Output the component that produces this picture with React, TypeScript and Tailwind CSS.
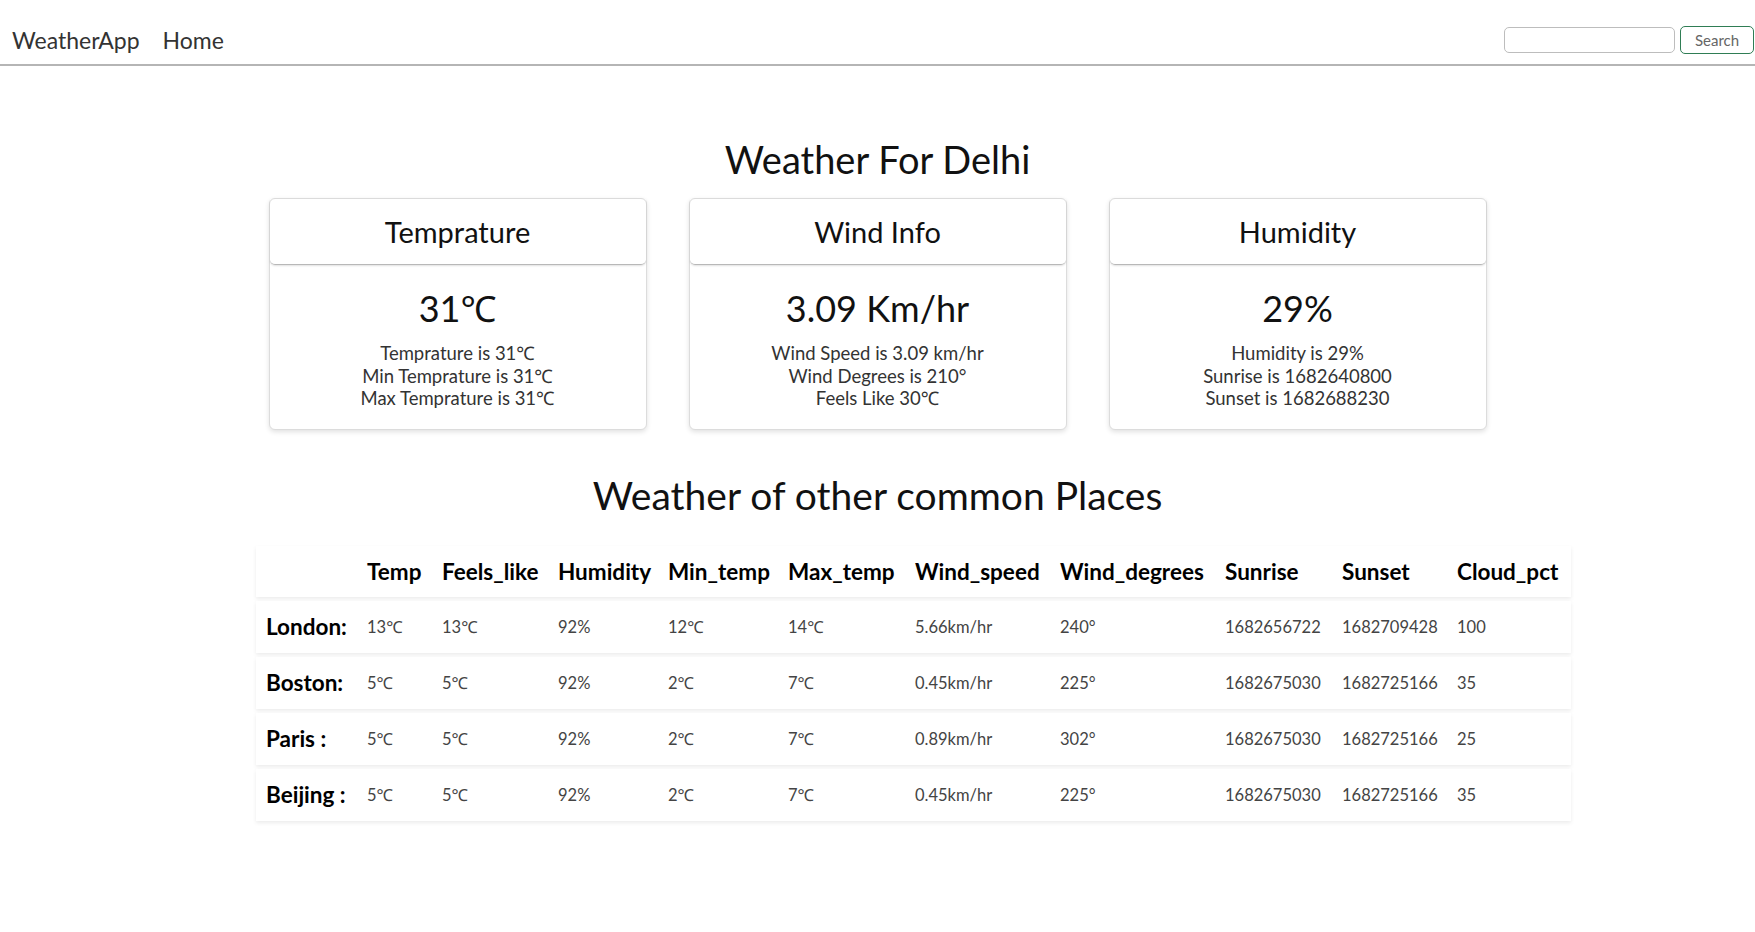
import React from "react";

const cols = [102, 75, 116, 110, 120, 127, 145, 165, 117, 115, 123];
const headers = ["", "Temp", "Feels_like", "Humidity", "Min_temp", "Max_temp", "Wind_speed", "Wind_degrees", "Sunrise", "Sunset", "Cloud_pct"];
const rows = [
  ["London:", "13℃", "13℃", "92%", "12℃", "14℃", "5.66km/hr", "240°", "1682656722", "1682709428", "100"],
  ["Boston:", "5℃", "5℃", "92%", "2℃", "7℃", "0.45km/hr", "225°", "1682675030", "1682725166", "35"],
  ["Paris :", "5℃", "5℃", "92%", "2℃", "7℃", "0.89km/hr", "302°", "1682675030", "1682725166", "25"],
  ["Beijing :", "5℃", "5℃", "92%", "2℃", "7℃", "0.45km/hr", "225°", "1682675030", "1682725166", "35"],
];

function Card({ title, value, lines }: { title: string; value: string; lines: string[] }) {
  return (
    <div className="w-[378px] h-[232px] rounded-[6px] border border-[#dcdcdc] shadow-[0_2px_5px_rgba(0,0,0,0.12)] bg-white flex flex-col">
      <div className="h-[66px] flex items-center justify-center border-b border-[#b8b8b8] rounded-b-[5px] shadow-[0_1px_2px_rgba(0,0,0,0.12)] text-[29px] text-[#111]">
        {title}
      </div>
      <div className="flex flex-col items-center pt-[20px]">
        <div className="text-[36px] leading-[46px] text-[#111]">{value}</div>
        <div className="mt-[11px] flex flex-col items-center text-[18.5px] leading-[22.5px] text-[#333]">
          {lines.map((l) => (
            <div key={l}>{l}</div>
          ))}
        </div>
      </div>
    </div>
  );
}

export default function App() {
  return (
    <div className="min-h-[932px] bg-white font-['Lato','Noto_Sans',sans-serif] text-[#222]">
      <nav className="h-[66px] border-b-2 border-[#b5b5b5] flex items-center justify-between pl-[12px] pr-[1px] pt-[16px]">
        <div className="flex items-center gap-[23px] text-[23px] text-[#333]">
          <span>WeatherApp</span>
          <span>Home</span>
        </div>
        <div className="flex items-center gap-[5px]">
          <div className="w-[171px] h-[26px] rounded-[5px] border border-[#bdbdbd]" />
          <div className="w-[74px] h-[28px] rounded-[5px] border border-[#2f7d55] flex items-center justify-center text-[15px] text-[#666]">
            Search
          </div>
        </div>
      </nav>

      <div className="flex flex-col items-center">
        <h1 className="mt-[70px] text-[38px] leading-[46px] text-[#111]">Weather For Delhi</h1>
        <div className="mt-[16px] flex gap-[42px]">
          <Card title="Temprature" value="31℃" lines={["Temprature is 31℃", "Min Temprature is 31℃", "Max Temprature is 31℃"]} />
          <Card title="Wind Info" value="3.09 Km/hr" lines={["Wind Speed is 3.09 km/hr", "Wind Degrees is 210°", "Feels Like 30℃"]} />
          <Card title="Humidity" value="29%" lines={["Humidity is 29%", "Sunrise is 1682640800", "Sunset is 1682688230"]} />
        </div>
        <h2 className="mt-[42px] text-[39px] leading-[46px] text-[#111]">Weather of other common Places</h2>
        <div className="self-stretch pl-[256px] mt-[28px]">
          <div className="w-[1315px] flex flex-col gap-[4px]">
            <div className="h-[51px] flex items-center bg-white shadow-[0_2px_4px_rgba(0,0,0,0.08)]">
              {headers.map((h, i) => (
                <div key={i} style={{ width: cols[i] }} className="pl-[9px] text-[22.5px] font-bold text-black whitespace-nowrap">
                  {h}
                </div>
              ))}
            </div>
            {rows.map((r) => (
              <div key={r[0]} className="h-[52px] flex items-center bg-white shadow-[0_2px_4px_rgba(0,0,0,0.08)]">
                {r.map((c, i) => (
                  <div
                    key={i}
                    style={{ width: cols[i] }}
                    className={
                      i === 0
                        ? "pl-[10px] text-[22.5px] font-bold text-black whitespace-nowrap"
                        : "pl-[9px] text-[16.5px] text-[#444] whitespace-nowrap"
                    }
                  >
                    {c}
                  </div>
                ))}
              </div>
            ))}
          </div>
        </div>
      </div>
    </div>
  );
}
